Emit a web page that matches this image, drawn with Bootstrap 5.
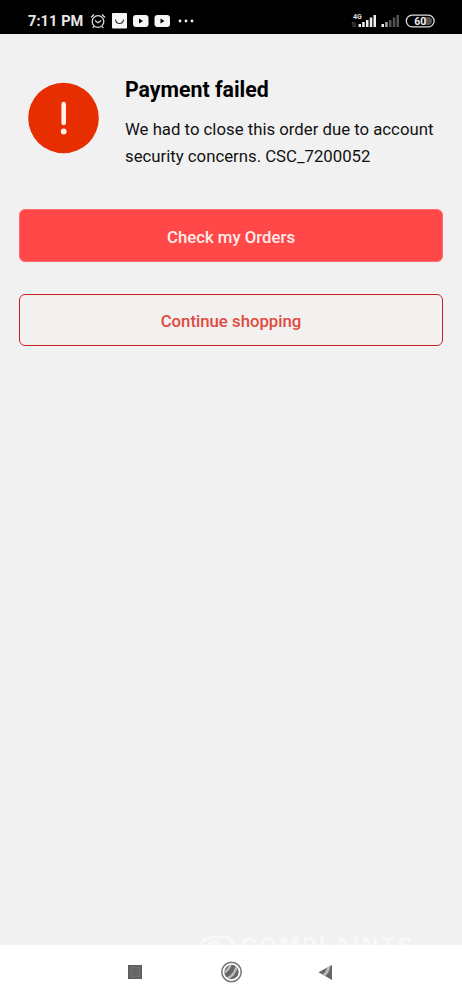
<!DOCTYPE html>
<html lang="en">
<head>
<meta charset="utf-8">
<meta name="viewport" content="width=device-width, initial-scale=1">
<title>Payment failed</title>
<link href="https://cdn.jsdelivr.net/npm/bootstrap@5.3.0/dist/css/bootstrap.min.css" rel="stylesheet">
<style>
body{font-family:Roboto,"Liberation Sans",sans-serif;background:#f1f1f1;color:#111;height:1000px;overflow:hidden}
svg{display:block;flex:none}
.status-bar{height:34px;background:#000;color:#e8e8e8;padding:8px 27px 0 28px}
.clock{font-size:14.5px;font-weight:700;line-height:28px;width:62px;letter-spacing:.1px;white-space:nowrap}
.notice{padding:42px 0 0 28px;gap:26px}
.alert-disc{margin-top:6px}
.notice h1{font-size:21.3px;font-weight:700;line-height:28px;margin:0 0 12px;color:#000}
.notice p{font-size:16.75px;line-height:27px;margin:0;white-space:nowrap}
.actions{padding:39px 19px 0;gap:32px}
.actions .btn{height:52.500px;border-radius:6px;font-size:16.75px;font-weight:500;padding:4px 0 0}
.btn-orders{background:#ff4847;color:#ffeceb;border:1px solid #ff6c6b}
.btn-shop{color:#df4a41;border:1px solid #c91f26;background:#f2f1f0}
.watermark{height:10px;overflow:hidden;padding-left:199px;color:#f8f8f8;gap:5px}
.watermark span{font:700 22px/22px Inter,sans-serif;letter-spacing:2.5px;margin-top:-1px;white-space:nowrap}
.nav-bar{height:55px;background:#fff}
</style>
</head>
<body class="d-flex flex-column">
<header class="status-bar d-flex align-items-start">
  <div class="clock">7:11 PM</div>
  <svg width="110" height="26" viewBox="90 8 110 26" fill="none">
    <g stroke="#ddd" stroke-width="1.3"><circle cx="98" cy="21.5" r="5.8"/><path d="M91 17.5l3-3M105 17.5l-3-3M95 20.5l3 2.2 3.2-2.2M94 26.5l-1.3 1.4M102 26.5l1.3 1.4"/></g>
    <path d="M112.500 13.500h14v14.500h-14z" fill="#f5f5f5" stroke="#f5f5f5" stroke-linejoin="round"/><path d="M115.500 19.500q.5 4 4 4t4-4" stroke="#333" stroke-width="1.2"/>
    <rect x="133" y="15" width="15.5" height="12" rx="3" fill="#f5f5f5"/><path d="M139 18.5v5l4-2.5z" fill="#000"/>
    <rect x="154.500" y="15" width="15.500" height="12" rx="3" fill="#f5f5f5"/><path d="M160.500 18.500v5l4-2.500z" fill="#000"/>
    <g fill="#eee"><circle cx="180" cy="21" r="1.4"/><circle cx="186" cy="21" r="1.4"/><circle cx="192" cy="21" r="1.4"/></g>
  </svg>
  <svg class="ms-auto" width="85" height="26" viewBox="350 8 85 26">
    <text x="353" y="19.300" font-size="7" font-weight="700" fill="#ddd">4G</text>
    <path d="M353 22v5M351.800 23.500l1.200-1.500M355 22v5l1.200-1.500" stroke="#666" stroke-width=".8" fill="none"/>
    <path d="M358.500 24h2.500v3h-2.500zM362.200 22h2.500v5h-2.500zM366 20h2.500v7h-2.500zM369.800 17.500h2.500v9.500h-2.500zM373.500 15h2.500v12h-2.500zM381.500 24h2.500v3h-2.500z" fill="#eee"/>
    <path d="M385.200 22h2.500v5h-2.500z" fill="#aaa"/><path d="M389 20h2.500v7h-2.500zM392.800 17.500h2.500v9.500h-2.500zM396.500 15h2.500v12h-2.500z" fill="#555"/>
    <rect x="406.300" y="15.200" width="27.800" height="11.600" rx="5.800" fill="#000" stroke="#ddd" stroke-width="1.300"/>
    <path d="M424 17h4a4 4 0 0 1 0 8h-4z" fill="#555"/>
    <text x="420.300" y="24.800" text-anchor="middle" font-size="10.500" font-weight="700" fill="#eee">60</text>
  </svg>
</header>
<main class="flex-grow-1 d-flex flex-column">
  <section class="notice d-flex align-items-start">
    <svg class="alert-disc" width="71" height="72" viewBox="0 0 71 72"><circle cx="35.500" cy="36" r="35.300" fill="#e62e00"/><path d="M35.700 22v19" stroke="#fff0ea" stroke-width="4.600" stroke-linecap="round"/><circle cx="35.700" cy="49.500" r="2.900" fill="#fff0ea"/></svg>
    <div>
      <h1>Payment failed</h1>
      <p>We had to close this order due to account<br>security concerns. CSC_7200052</p>
    </div>
  </section>
  <div class="actions d-grid">
    <button type="button" class="btn btn-orders">Check my Orders</button>
    <button type="button" class="btn btn-shop">Continue shopping</button>
  </div>
  <div class="watermark d-flex mt-auto" aria-hidden="true">
    <svg width="37" height="30" viewBox="0 0 37 30" fill="none" stroke="#f8f8f8" stroke-width="3"><path d="M2 11Q4 2 14 2h11q8 0 10 9M10 11q1-4 6-4t6 4"/></svg>
    <span>COMPLAINTS</span>
  </div>
</main>
<nav class="nav-bar" aria-label="System navigation">
  <svg width="462" height="55" viewBox="0 945 462 55">
    <defs><clipPath id="globe"><circle cx="231.500" cy="972" r="7.200"/></clipPath><clipPath id="back"><path d="M318.500 972.300L332 965v15z"/></clipPath></defs>
    <rect x="128.500" y="965.500" width="13" height="13" fill="#666" stroke="#5c5c5c"/><rect x="131.500" y="967.500" width="8" height="9" fill="none" stroke="#707070"/>
    <circle cx="231.500" cy="972" r="9.700" fill="#fff" stroke="#777" stroke-width="1.500"/>
    <g clip-path="url(#globe)"><path d="M223 964h17v17h-17z" fill="#666"/><path d="M223 973q6-2 8-10M226 979q9-3 11-14" fill="none" stroke="#bbb" stroke-width="2.400"/></g>
    <g clip-path="url(#back)"><path d="M318 964h15v17h-15z" fill="#666"/><path d="M321 977q7-3 8-12" fill="none" stroke="#bbb" stroke-width="3"/></g>
  </svg>
</nav>
<script src="https://cdn.jsdelivr.net/npm/bootstrap@5.3.0/dist/js/bootstrap.bundle.min.js"></script>
</body>
</html>
